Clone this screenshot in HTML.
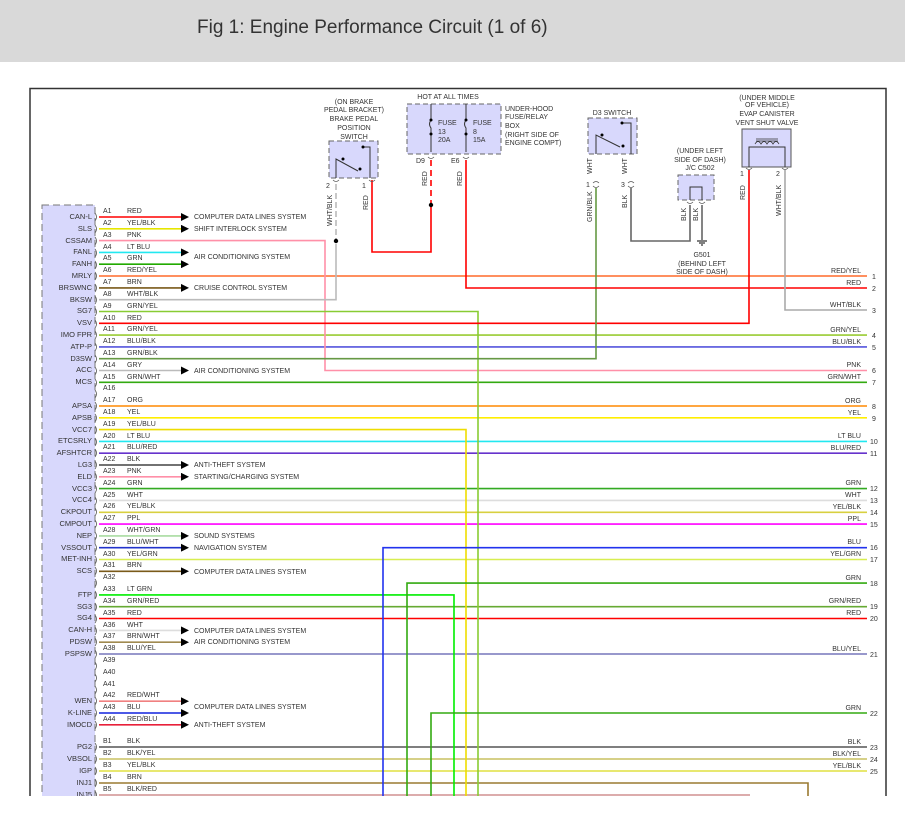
<!DOCTYPE html>
<html><head><meta charset="utf-8"><style>
html,body{margin:0;padding:0;background:#fff;width:905px;height:824px;overflow:hidden}
svg{display:block}
text{font-family:"Liberation Sans",Arial,sans-serif;fill:#333}
.p{font-size:7px}
.n{font-size:7.5px;text-anchor:end}
.s{font-size:7px}
.c{font-size:7px;text-anchor:middle}
.r{font-size:7px;text-anchor:end}
</style></head><body>
<svg width="905" height="824" viewBox="0 0 905 824" xmlns="http://www.w3.org/2000/svg">
<defs><clipPath id="cl"><rect x="0" y="0" width="905" height="796"/></clipPath>
<marker id="ar" markerWidth="8" markerHeight="8" refX="0" refY="4" orient="auto" markerUnits="userSpaceOnUse"><path d="M0,0 L8,4 L0,8 z" fill="#000"/></marker></defs>
<rect x="0" y="0" width="905" height="62" fill="#d9d9d9"/>
<text x="197" y="33" style="font-size:19px;fill:#333">Fig 1: Engine Performance Circuit (1 of 6)</text>
<g clip-path="url(#cl)">
<path d="M30,800 V88.5 H886 V800" fill="none" stroke="#333" stroke-width="1.5"/>
<rect x="42" y="205" width="53" height="620" fill="#d8d8fc" stroke="#777" stroke-dasharray="7,4"/>
<g fill="none" stroke-width="1.6">
<!-- arrows -->
<line x1="99" y1="217" x2="181" y2="217" stroke="#f00" marker-end="url(#ar)"/>
<line x1="99" y1="228.8" x2="181" y2="228.8" stroke="#e6e600" marker-end="url(#ar)"/>
<line x1="99" y1="252.4" x2="181" y2="252.4" stroke="#22e8f0" marker-end="url(#ar)"/>
<line x1="99" y1="264.2" x2="181" y2="264.2" stroke="#22aa00" marker-end="url(#ar)"/>
<line x1="99" y1="287.9" x2="181" y2="287.9" stroke="#7a5a1a" marker-end="url(#ar)"/>
<line x1="99" y1="370.5" x2="181" y2="370.5" stroke="#bbb" marker-end="url(#ar)"/>
<line x1="99" y1="465" x2="181" y2="465" stroke="#444" marker-end="url(#ar)"/>
<line x1="99" y1="476.8" x2="181" y2="476.8" stroke="#ff8fa8" marker-end="url(#ar)"/>
<line x1="99" y1="535.9" x2="181" y2="535.9" stroke="#a8dca0" marker-end="url(#ar)"/>
<line x1="99" y1="547.7" x2="181" y2="547.7" stroke="#2233cc" marker-end="url(#ar)"/>
<line x1="99" y1="571.3" x2="181" y2="571.3" stroke="#7a5a1a" marker-end="url(#ar)"/>
<line x1="99" y1="630.4" x2="181" y2="630.4" stroke="#ddd" marker-end="url(#ar)"/>
<line x1="99" y1="642.2" x2="181" y2="642.2" stroke="#a08a50" marker-end="url(#ar)"/>
<line x1="99" y1="701.2" x2="181" y2="701.2" stroke="#f08080" marker-end="url(#ar)"/>
<line x1="99" y1="713" x2="181" y2="713" stroke="#1122dd" marker-end="url(#ar)"/>
<line x1="99" y1="724.8" x2="181" y2="724.8" stroke="#e8203a" marker-end="url(#ar)"/>
<!-- full wires -->
<line x1="99" y1="276" x2="867" y2="276" stroke="#ff6a2a"/>
<line x1="99" y1="335.1" x2="867" y2="335.1" stroke="#99cc33"/>
<line x1="99" y1="346.9" x2="867" y2="346.9" stroke="#5555dd"/>
<line x1="99" y1="382.3" x2="867" y2="382.3" stroke="#33aa11"/>
<line x1="99" y1="406" x2="867" y2="406" stroke="#ff8800"/>
<line x1="99" y1="417.8" x2="867" y2="417.8" stroke="#ffee00"/>
<line x1="99" y1="441.4" x2="867" y2="441.4" stroke="#22e8f0"/>
<line x1="99" y1="453.2" x2="867" y2="453.2" stroke="#6633cc"/>
<line x1="99" y1="488.6" x2="867" y2="488.6" stroke="#33aa22"/>
<line x1="99" y1="500.4" x2="867" y2="500.4" stroke="#ddd"/>
<line x1="99" y1="512.3" x2="867" y2="512.3" stroke="#d8d040"/>
<line x1="99" y1="524.1" x2="867" y2="524.1" stroke="#ff00ff"/>
<line x1="99" y1="559.5" x2="867" y2="559.5" stroke="#d8ee50"/>
<line x1="99" y1="606.7" x2="867" y2="606.7" stroke="#66aa33"/>
<line x1="99" y1="618.5" x2="867" y2="618.5" stroke="#f00"/>
<line x1="99" y1="654" x2="867" y2="654" stroke="#7777bb"/>
<line x1="99" y1="747" x2="867" y2="747" stroke="#555"/>
<line x1="99" y1="759" x2="867" y2="759" stroke="#c8c060"/>
<line x1="99" y1="771" x2="867" y2="771" stroke="#e0e040"/>
<polyline points="99,783 808,783 808,800" stroke="#9a7a30"/>
<line x1="99" y1="795" x2="750" y2="795" stroke="#d09090"/>
<!-- routed -->
<polyline points="99,240.6 325,240.6 325,370.5 867,370.5" stroke="#ff90a8"/>
<polyline points="99,299.7 336,299.7 336,244" stroke="#bbb"/>
<line x1="336" y1="184" x2="336" y2="240" stroke="#bbb" stroke-dasharray="6,3"/>
<polyline points="99,311.5 478,311.5 478,800" stroke="#88cc33"/>
<polyline points="99,323.3 749,323.3 749,170" stroke="#f00"/>
<polyline points="99,358.7 596,358.7 596,188" stroke="#669944"/>
<polyline points="99,429.6 466,429.6 466,800" stroke="#eedd00"/>
<polyline points="99,594.9 454,594.9 454,800" stroke="#00ee00"/>
<polyline points="383,800 383,547.7 867,547.7" stroke="#2233ee"/>
<polyline points="407,800 407,583.1 867,583.1" stroke="#33aa11"/>
<polyline points="431,800 431,713 867,713" stroke="#33aa11"/>
<polyline points="372,180 372,252 431,252 431,205" stroke="#f00"/>
<line x1="431" y1="160" x2="431" y2="205" stroke="#f00" stroke-dasharray="6,4"/>
<polyline points="466,160 466,288 867,288" stroke="#f00"/>
<polyline points="785,170 785,310 867,310" stroke="#aaa"/>
<polyline points="631,188 631,241 690,241 690,205" stroke="#666"/>
<line x1="702" y1="205" x2="702" y2="240" stroke="#666"/>
</g>
<circle cx="336" cy="241" r="2.2" fill="#000"/>
<circle cx="431" cy="205" r="2.2" fill="#000"/>
<!-- ground -->
<g stroke="#000" stroke-width="1"><line x1="697" y1="241" x2="707" y2="241"/><line x1="699" y1="243" x2="705" y2="243"/><line x1="701" y1="245" x2="703" y2="245"/></g>
<!-- connector marks -->
<g fill="none" stroke="#555" stroke-width="0.8">
<path d="M95,213 q3,4 0,8 M95,225 q3,4 0,8 M95,237 q3,4 0,8 M95,249 q3,4 0,8 M95,261 q3,4 0,8 M95,272 q3,4 0,8 M95,284 q3,4 0,8 M95,296 q3,4 0,8 M95,308 q3,4 0,8 M95,320 q3,4 0,8 M95,331 q3,4 0,8 M95,343 q3,4 0,8 M95,355 q3,4 0,8 M95,367 q3,4 0,8 M95,379 q3,4 0,8 M95,390 q3,4 0,8 M95,402 q3,4 0,8 M95,414 q3,4 0,8 M95,426 q3,4 0,8 M95,438 q3,4 0,8 M95,449 q3,4 0,8 M95,461 q3,4 0,8 M95,473 q3,4 0,8 M95,485 q3,4 0,8 M95,497 q3,4 0,8 M95,508 q3,4 0,8 M95,520 q3,4 0,8 M95,532 q3,4 0,8 M95,544 q3,4 0,8 M95,556 q3,4 0,8 M95,567 q3,4 0,8 M95,579 q3,4 0,8 M95,591 q3,4 0,8 M95,603 q3,4 0,8 M95,615 q3,4 0,8 M95,627 q3,4 0,8 M95,638 q3,4 0,8 M95,650 q3,4 0,8 M95,662 q3,4 0,8 M95,674 q3,4 0,8 M95,686 q3,4 0,8 M95,697 q3,4 0,8 M95,709 q3,4 0,8 M95,721 q3,4 0,8 M95,743 q3,4 0,8 M95,755 q3,4 0,8 M95,767 q3,4 0,8 M95,779 q3,4 0,8 M95,791 q3,4 0,8"/>
<path d="M333,180 q3,3 6,0 M369,180 q3,3 6,0 M428,157 q3,3 6,0 M463,157 q3,3 6,0 M593,183 q3,-3 6,0 M593,186 q3,3 6,0 M628,183 q3,-3 6,0 M628,186 q3,3 6,0 M746,168 q3,3 6,0 M782,168 q3,3 6,0 M687,202 q3,3 6,0 M699,202 q3,3 6,0"/>
</g>
<!-- component boxes -->
<rect x="329" y="141" width="49" height="37" fill="#d8d8fc" stroke="#666" stroke-dasharray="5,3"/>
<polyline points="336,178 336,159 358,171" fill="none" stroke="#333"/><circle cx="343" cy="159" r="1.5"/><circle cx="360" cy="169" r="1.5"/>
<polyline points="363,147 370,147 370,178" fill="none" stroke="#333"/><circle cx="363" cy="147" r="1.5"/>
<rect x="407" y="104" width="94" height="50" fill="#d8d8fc" stroke="#666" stroke-dasharray="5,3"/>
<g fill="none" stroke="#333"><path d="M431,104 V120 q-3,4 0,8 V152 M466,104 V120 q-3,4 0,8 V152"/></g>
<circle cx="431" cy="120" r="1.5"/><circle cx="431" cy="134" r="1.5"/><circle cx="466" cy="120" r="1.5"/><circle cx="466" cy="134" r="1.5"/>
<rect x="588" y="118" width="49" height="36" fill="#d8d8fc" stroke="#666" stroke-dasharray="5,3"/>
<polyline points="596,154 596,135 620,147" fill="none" stroke="#333"/><circle cx="602" cy="135" r="1.5"/><circle cx="623" cy="146" r="1.5"/>
<polyline points="622,123 631,123 631,154" fill="none" stroke="#333"/><circle cx="622" cy="123" r="1.5"/>
<rect x="678" y="175" width="36" height="25" fill="#d8d8fc" stroke="#666" stroke-dasharray="5,3"/>
<polyline points="690,200 690,187 702,187 702,200" fill="none" stroke="#333"/>
<rect x="742" y="129" width="49" height="38" fill="#d8d8fc" stroke="#555"/>
<polyline points="749,167 749,147 785,147 785,167" fill="none" stroke="#333"/>
<path d="M755,144 q3,-5 6,0 q3,-5 6,0 q3,-5 6,0 q3,-5 6,0 M756,139 H778 M756,141 H778" fill="none" stroke="#333" stroke-width="0.8"/>
<!-- component text -->
<text class="c" x="354" y="104">(ON BRAKE</text><text class="c" x="354" y="112">PEDAL BRACKET)</text><text class="c" x="354" y="121">BRAKE PEDAL</text><text class="c" x="354" y="130">POSITION</text><text class="c" x="354" y="139">SWITCH</text>
<text class="s" x="326" y="188">2</text><text class="s" x="362" y="188">1</text>
<text class="s" transform="translate(332,226) rotate(-90)">WHT/BLK</text>
<text class="s" transform="translate(368,210) rotate(-90)">RED</text>
<text class="c" x="448" y="99">HOT AT ALL TIMES</text>
<text class="s" x="438" y="125">FUSE</text><text class="s" x="438" y="134">13</text><text class="s" x="438" y="142">20A</text>
<text class="s" x="473" y="125">FUSE</text><text class="s" x="473" y="134">8</text><text class="s" x="473" y="142">15A</text>
<text class="s" x="416" y="163">D9</text><text class="s" x="451" y="163">E6</text>
<text class="s" transform="translate(427,186) rotate(-90)">RED</text>
<text class="s" transform="translate(462,186) rotate(-90)">RED</text>
<text class="s" x="505" y="111">UNDER-HOOD</text><text class="s" x="505" y="119">FUSE/RELAY</text><text class="s" x="505" y="128">BOX</text><text class="s" x="505" y="137">(RIGHT SIDE OF</text><text class="s" x="505" y="145">ENGINE COMPT)</text>
<text class="c" x="612" y="115">D3 SWITCH</text>
<text class="s" transform="translate(592,174) rotate(-90)">WHT</text><text class="s" transform="translate(627,174) rotate(-90)">WHT</text>
<text class="s" x="586" y="187">1</text><text class="s" x="621" y="187">3</text>
<text class="s" transform="translate(592,222) rotate(-90)">GRN/BLK</text><text class="s" transform="translate(627,208) rotate(-90)">BLK</text>
<text class="c" x="700" y="153">(UNDER LEFT</text><text class="c" x="700" y="162">SIDE OF DASH)</text><text class="c" x="700" y="170">J/C C502</text>
<text class="s" transform="translate(686,221) rotate(-90)">BLK</text><text class="s" transform="translate(698,221) rotate(-90)">BLK</text>
<text class="c" x="702" y="257">G501</text><text class="c" x="702" y="266">(BEHIND LEFT</text><text class="c" x="702" y="274">SIDE OF DASH)</text>
<text class="c" x="767" y="100">(UNDER MIDDLE</text><text class="c" x="767" y="107">OF VEHICLE)</text><text class="c" x="767" y="116">EVAP CANISTER</text><text class="c" x="767" y="125">VENT SHUT VALVE</text>
<text class="s" x="740" y="176">1</text><text class="s" x="776" y="176">2</text>
<text class="s" transform="translate(745,200) rotate(-90)">RED</text><text class="s" transform="translate(781,216) rotate(-90)">WHT/BLK</text>
<!-- system labels -->
<text class="s" x="194" y="219">COMPUTER DATA LINES SYSTEM</text>
<text class="s" x="194" y="231">SHIFT INTERLOCK SYSTEM</text>
<text class="s" x="194" y="259">AIR CONDITIONING SYSTEM</text>
<text class="s" x="194" y="290">CRUISE CONTROL SYSTEM</text>
<text class="s" x="194" y="373">AIR CONDITIONING SYSTEM</text>
<text class="s" x="194" y="467">ANTI-THEFT SYSTEM</text>
<text class="s" x="194" y="479">STARTING/CHARGING SYSTEM</text>
<text class="s" x="194" y="538">SOUND SYSTEMS</text>
<text class="s" x="194" y="550">NAVIGATION SYSTEM</text>
<text class="s" x="194" y="574">COMPUTER DATA LINES SYSTEM</text>
<text class="s" x="194" y="633">COMPUTER DATA LINES SYSTEM</text>
<text class="s" x="194" y="644">AIR CONDITIONING SYSTEM</text>
<text class="s" x="194" y="709">COMPUTER DATA LINES SYSTEM</text>
<text class="s" x="194" y="727">ANTI-THEFT SYSTEM</text>
<!-- pin labels -->
<g class="p">
<text class="p" x="103" y="213">A1</text><text class="p" x="127" y="213">RED</text>
<text class="p" x="103" y="225">A2</text><text class="p" x="127" y="225">YEL/BLK</text>
<text class="p" x="103" y="237">A3</text><text class="p" x="127" y="237">PNK</text>
<text class="p" x="103" y="249">A4</text><text class="p" x="127" y="249">LT BLU</text>
<text class="p" x="103" y="260">A5</text><text class="p" x="127" y="260">GRN</text>
<text class="p" x="103" y="272">A6</text><text class="p" x="127" y="272">RED/YEL</text>
<text class="p" x="103" y="284">A7</text><text class="p" x="127" y="284">BRN</text>
<text class="p" x="103" y="296">A8</text><text class="p" x="127" y="296">WHT/BLK</text>
<text class="p" x="103" y="308">A9</text><text class="p" x="127" y="308">GRN/YEL</text>
<text class="p" x="103" y="320">A10</text><text class="p" x="127" y="320">RED</text>
<text class="p" x="103" y="331">A11</text><text class="p" x="127" y="331">GRN/YEL</text>
<text class="p" x="103" y="343">A12</text><text class="p" x="127" y="343">BLU/BLK</text>
<text class="p" x="103" y="355">A13</text><text class="p" x="127" y="355">GRN/BLK</text>
<text class="p" x="103" y="367">A14</text><text class="p" x="127" y="367">GRY</text>
<text class="p" x="103" y="379">A15</text><text class="p" x="127" y="379">GRN/WHT</text>
<text class="p" x="103" y="390">A16</text>
<text class="p" x="103" y="402">A17</text><text class="p" x="127" y="402">ORG</text>
<text class="p" x="103" y="414">A18</text><text class="p" x="127" y="414">YEL</text>
<text class="p" x="103" y="426">A19</text><text class="p" x="127" y="426">YEL/BLU</text>
<text class="p" x="103" y="438">A20</text><text class="p" x="127" y="438">LT BLU</text>
<text class="p" x="103" y="449">A21</text><text class="p" x="127" y="449">BLU/RED</text>
<text class="p" x="103" y="461">A22</text><text class="p" x="127" y="461">BLK</text>
<text class="p" x="103" y="473">A23</text><text class="p" x="127" y="473">PNK</text>
<text class="p" x="103" y="485">A24</text><text class="p" x="127" y="485">GRN</text>
<text class="p" x="103" y="497">A25</text><text class="p" x="127" y="497">WHT</text>
<text class="p" x="103" y="508">A26</text><text class="p" x="127" y="508">YEL/BLK</text>
<text class="p" x="103" y="520">A27</text><text class="p" x="127" y="520">PPL</text>
<text class="p" x="103" y="532">A28</text><text class="p" x="127" y="532">WHT/GRN</text>
<text class="p" x="103" y="544">A29</text><text class="p" x="127" y="544">BLU/WHT</text>
<text class="p" x="103" y="556">A30</text><text class="p" x="127" y="556">YEL/GRN</text>
<text class="p" x="103" y="567">A31</text><text class="p" x="127" y="567">BRN</text>
<text class="p" x="103" y="579">A32</text>
<text class="p" x="103" y="591">A33</text><text class="p" x="127" y="591">LT GRN</text>
<text class="p" x="103" y="603">A34</text><text class="p" x="127" y="603">GRN/RED</text>
<text class="p" x="103" y="615">A35</text><text class="p" x="127" y="615">RED</text>
<text class="p" x="103" y="627">A36</text><text class="p" x="127" y="627">WHT</text>
<text class="p" x="103" y="638">A37</text><text class="p" x="127" y="638">BRN/WHT</text>
<text class="p" x="103" y="650">A38</text><text class="p" x="127" y="650">BLU/YEL</text>
<text class="p" x="103" y="662">A39</text>
<text class="p" x="103" y="674">A40</text>
<text class="p" x="103" y="686">A41</text>
<text class="p" x="103" y="697">A42</text><text class="p" x="127" y="697">RED/WHT</text>
<text class="p" x="103" y="709">A43</text><text class="p" x="127" y="709">BLU</text>
<text class="p" x="103" y="721">A44</text><text class="p" x="127" y="721">RED/BLU</text>
<text class="p" x="103" y="743">B1</text><text class="p" x="127" y="743">BLK</text>
<text class="p" x="103" y="755">B2</text><text class="p" x="127" y="755">BLK/YEL</text>
<text class="p" x="103" y="767">B3</text><text class="p" x="127" y="767">YEL/BLK</text>
<text class="p" x="103" y="779">B4</text><text class="p" x="127" y="779">BRN</text>
<text class="p" x="103" y="791">B5</text><text class="p" x="127" y="791">BLK/RED</text>
</g>
<!-- left names -->
<text class="n" x="92" y="219">CAN-L</text><text class="n" x="92" y="231">SLS</text><text class="n" x="92" y="243">CSSAM</text><text class="n" x="92" y="254">FANL</text><text class="n" x="92" y="266">FANH</text><text class="n" x="92" y="278">MRLY</text><text class="n" x="92" y="290">BRSWNC</text><text class="n" x="92" y="302">BKSW</text><text class="n" x="92" y="313">SG7</text><text class="n" x="92" y="325">VSV</text><text class="n" x="92" y="337">IMO FPR</text><text class="n" x="92" y="349">ATP-P</text><text class="n" x="92" y="361">D3SW</text><text class="n" x="92" y="372">ACC</text><text class="n" x="92" y="384">MCS</text>
<text class="n" x="92" y="408">APSA</text><text class="n" x="92" y="420">APSB</text><text class="n" x="92" y="432">VCC7</text><text class="n" x="92" y="443">ETCSRLY</text><text class="n" x="92" y="455">AFSHTCR</text><text class="n" x="92" y="467">LG3</text><text class="n" x="92" y="479">ELD</text><text class="n" x="92" y="491">VCC3</text><text class="n" x="92" y="502">VCC4</text><text class="n" x="92" y="514">CKPOUT</text><text class="n" x="92" y="526">CMPOUT</text><text class="n" x="92" y="538">NEP</text><text class="n" x="92" y="550">VSSOUT</text><text class="n" x="92" y="561">MET-INH</text><text class="n" x="92" y="573">SCS</text>
<text class="n" x="92" y="597">FTP</text><text class="n" x="92" y="609">SG3</text><text class="n" x="92" y="620">SG4</text><text class="n" x="92" y="632">CAN-H</text><text class="n" x="92" y="644">PDSW</text><text class="n" x="92" y="656">PSPSW</text>
<text class="n" x="92" y="703">WEN</text><text class="n" x="92" y="715">K-LINE</text><text class="n" x="92" y="727">IMOCD</text>
<text class="n" x="92" y="749">PG2</text><text class="n" x="92" y="761">VBSOL</text><text class="n" x="92" y="773">IGP</text><text class="n" x="92" y="785">INJ1</text><text class="n" x="92" y="797">INJ5</text>
<!-- right labels -->
<text class="r" x="861" y="273">RED/YEL</text><text class="s" x="872" y="279">1</text>
<text class="r" x="861" y="285">RED</text><text class="s" x="872" y="291">2</text>
<text class="r" x="861" y="307">WHT/BLK</text><text class="s" x="872" y="313">3</text>
<text class="r" x="861" y="332">GRN/YEL</text><text class="s" x="872" y="338">4</text>
<text class="r" x="861" y="344">BLU/BLK</text><text class="s" x="872" y="350">5</text>
<text class="r" x="861" y="367">PNK</text><text class="s" x="872" y="373">6</text>
<text class="r" x="861" y="379">GRN/WHT</text><text class="s" x="872" y="385">7</text>
<text class="r" x="861" y="403">ORG</text><text class="s" x="872" y="409">8</text>
<text class="r" x="861" y="415">YEL</text><text class="s" x="872" y="421">9</text>
<text class="r" x="861" y="438">LT BLU</text><text class="s" x="870" y="444">10</text>
<text class="r" x="861" y="450">BLU/RED</text><text class="s" x="870" y="456">11</text>
<text class="r" x="861" y="485">GRN</text><text class="s" x="870" y="491">12</text>
<text class="r" x="861" y="497">WHT</text><text class="s" x="870" y="503">13</text>
<text class="r" x="861" y="509">YEL/BLK</text><text class="s" x="870" y="515">14</text>
<text class="r" x="861" y="521">PPL</text><text class="s" x="870" y="527">15</text>
<text class="r" x="861" y="544">BLU</text><text class="s" x="870" y="550">16</text>
<text class="r" x="861" y="556">YEL/GRN</text><text class="s" x="870" y="562">17</text>
<text class="r" x="861" y="580">GRN</text><text class="s" x="870" y="586">18</text>
<text class="r" x="861" y="603">GRN/RED</text><text class="s" x="870" y="609">19</text>
<text class="r" x="861" y="615">RED</text><text class="s" x="870" y="621">20</text>
<text class="r" x="861" y="651">BLU/YEL</text><text class="s" x="870" y="657">21</text>
<text class="r" x="861" y="710">GRN</text><text class="s" x="870" y="716">22</text>
<text class="r" x="861" y="744">BLK</text><text class="s" x="870" y="750">23</text>
<text class="r" x="861" y="756">BLK/YEL</text><text class="s" x="870" y="762">24</text>
<text class="r" x="861" y="768">YEL/BLK</text><text class="s" x="870" y="774">25</text>
</g>
</svg>
</body></html>
